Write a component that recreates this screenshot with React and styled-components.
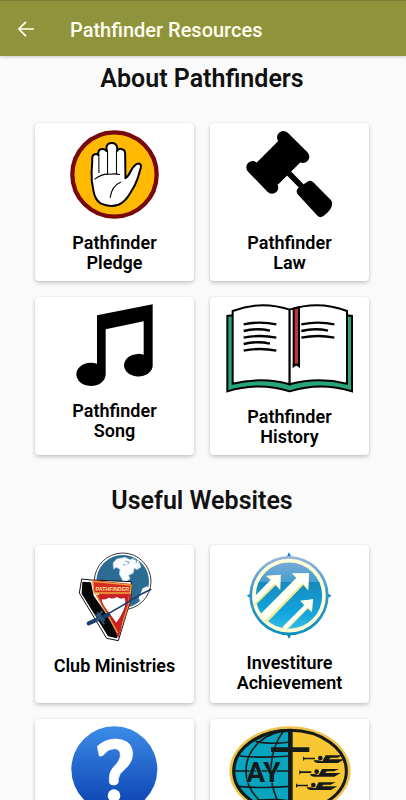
import React from "react";
import styled, { createGlobalStyle } from "styled-components";

const GlobalStyle = createGlobalStyle`
  *, *::before, *::after { box-sizing: border-box; }
  body {
    margin: 0;
    background: #fafafa;
    color: #111;
    font-family: Roboto, "Liberation Sans", sans-serif;
  }
`;

const Screen = styled.div`
  display: flex;
  flex-direction: column;
  height: 100vh;
  overflow: hidden;
`;

const AppBar = styled.header`
  display: flex;
  align-items: center;
  flex: none;
  height: 56px;
  padding: 2px 14px 0;
  gap: 32px;
  background: #8f933b;
  border-top: 1px solid #7c8034;
  box-shadow: 0 1px 3px rgba(0, 0, 0, 0.2);
  color: #fffff0;
  z-index: 1;
`;

const BackButton = styled.button`
  display: flex;
  padding: 0;
  border: 0;
  background: none;
  color: inherit;
  cursor: pointer;
`;

const BarTitle = styled.h1`
  margin: 0;
  font-size: 20px;
  font-weight: 500;
  line-height: 24px;
`;

const Content = styled.main`
  flex: 1;
  min-height: 0;
  overflow-y: auto;
  scrollbar-width: none;
  padding: 8px 37px 16px 35px;
`;

const Section = styled.section`
  margin-bottom: 31px;
`;

const SectionTitle = styled.h2`
  margin: 0 0 29px;
  font-size: 25px;
  font-weight: 600;
  line-height: 30px;
  text-align: center;
`;

const CardGrid = styled.div`
  display: grid;
  grid-template-columns: repeat(2, minmax(0, 1fr));
  gap: 16px;
`;

const Card = styled.a`
  display: flex;
  flex-direction: column;
  align-items: center;
  gap: 14px;
  aspect-ratio: 159 / 158;
  padding: 7px 8px;
  border-radius: 4px;
  background: #fff;
  box-shadow: 0 2px 4px rgba(0, 0, 0, 0.2), 0 0 2px rgba(0, 0, 0, 0.08);
  color: #000;
  text-decoration: none;
`;

const CardLabel = styled.span`
  max-width: ${({ $wide }) => ($wide ? "100%" : "110px")};
  font-size: 18px;
  font-weight: 600;
  line-height: 20px;
  text-align: center;
`;

const Art = styled.svg`
  display: block;
  flex: none;
`;

function BackArrow() {
  return (
    <Art width="24" height="24" viewBox="0 0 24 24" fill="none" stroke="currentColor" strokeWidth="1.7" aria-hidden="true">
      <path d="M20 11H5M12 3.8L4.8 11l7.2 7.2" />
    </Art>
  );
}

function HandArt() {
  return (
    <Art width="89" height="89" viewBox="120 35 268 268" aria-hidden="true">
      <circle cx="254" cy="169" r="127" fill="#ffb900" stroke="#790909" strokeWidth="13" />
      <path
        d="M187 128Q185 110 195 108Q200 106 205 110L205 103Q207 92 217 92Q226 91 230 98L230 86Q232 74 246 74Q260 74 262 88L262 98Q266 90 275 92Q286 94 286 106L287 180Q296 174 304 157Q314 138 326 136Q336 137 333 149L324 180Q316 204 302 224Q286 252 266 260Q240 269 212 256Q194 245 190 214Q184 190 185 162Z"
        fill="#fff" stroke="#000" strokeWidth="6" strokeLinejoin="round"
      />
      <path d="M207 108V163M233 96V165M260 97V167M195 183Q214 167 238 168Q258 166 269 169M272 192Q246 203 241 238" fill="none" stroke="#000" strokeWidth="3.2" strokeLinecap="round" />
    </Art>
  );
}

function GavelArt() {
  return (
    <Art width="87" height="89" viewBox="126 36 261 267" aria-hidden="true">
      <g stroke="#000" strokeLinejoin="round" strokeLinecap="round">
        <path d="M161 136L227 70L286 131L221 195Z" strokeWidth="8" />
        <path d="M238 58L297 116" strokeWidth="38" />
        <path d="M146 148L204 208" strokeWidth="38" />
        <path d="M245 156L300 212" strokeWidth="17" />
        <path d="M292 220L318 203L370 255Q373 266 350 283Z" strokeWidth="28" />
      </g>
    </Art>
  );
}

function NoteArt() {
  return (
    <Art width="77" height="83" viewBox="139 35 231 249" aria-hidden="true">
      <path d="M202 69L369 36V216A43 34 0 1 1 342 187V87L228 111V246A44 35 0 1 1 202 214Z" />
    </Art>
  );
}

function BookArt() {
  return (
    <Art width="127" height="89" viewBox="65 35 381 267" fill="none" stroke="#000" strokeWidth="6" aria-hidden="true">
      <path d="M86 69L69 71V297Q165 268 256 297Q350 268 443 297V71L427 69" fill="#26a67a" />
      <path d="M85 56Q170 23 256 52V276Q174 253 85 274Z" fill="#fff" />
      <path d="M256 52Q342 23 428 56V274Q339 253 256 276Z" fill="#fff" />
      <path d="M268 49L284 45V217H268Z" fill="#bd353d" />
      <path d="M265 214H287V228L276 219L265 228Z" fill="#000" stroke="none" />
      <path
        d="M118 96Q167 86 216 96M118 116Q158 106 197 115M118 136Q167 126 216 136M118 155Q158 145 197 154M118 175Q167 165 216 175M291 96Q341 86 390 96M291 116Q331 106 371 115M291 136Q341 126 390 136"
        strokeWidth="7"
      />
    </Art>
  );
}

function ClubArt() {
  return (
    <Art width="74" height="90" viewBox="53 30 222 270" aria-hidden="true">
      <circle cx="187" cy="118" r="85" fill="#fff" stroke="#111" strokeWidth="2.5" />
      <circle cx="187" cy="118" r="79" fill="#2c6b92" />
      <path
        d="M158 63L169 51L194 46L210 53L219 49L235 58L242 75L230 83L222 79L218 94L205 100L209 111L198 118L209 128L202 130L189 119L177 96L179 82L167 76L160 82Z"
        fill="#f9fbfc" stroke="#b7cedc" strokeWidth="2"
      />
      <path d="M195 57L207 61L201 67M218 51L229 54L227 64M188 67L195 70M216 134L225 136M231 120L230 142" fill="none" stroke="#2c6b92" strokeWidth="2" />
      <path d="M247 139L260 133L265 137Q258 166 240 180L235 168Z" fill="#f9fbfc" />
      <path d="M64 111L92 114L213 119L211 174L174 296L139 289L57 153Z" fill="#fff" stroke="#111" strokeWidth="3" />
      <path d="M66 119L92 121L100 161L177 271L169 289L143 283L64 155Z" fill="#060606" />
      <path d="M97 114L214 126L210 180L174 289Z" fill="#cc2529" />
      <path d="M97 118L212 129L210 153L101 153Z" fill="#d52b21" stroke="#efa940" strokeWidth="4" />
      <text x="156" y="146" textAnchor="middle" fontFamily="Liberation Sans" fontWeight="700" fontSize="16" fill="#ffe29b">PATHFINDER</text>
      <path d="M104 157L171 275L178 267L118 160ZM205 158L207 183L181 267L193 183Z" fill="#e39a35" />
      <path d="M110 158Q156 166 205 157L204 182L175 274Z" fill="#cd2028" />
      <path d="M122 169Q136 173 145 164Q157 172 169 163Q181 172 194 165Q201 183 192 204Q184 224 168 246Q153 224 134 199Q122 185 122 169Z" fill="#fff" stroke="#bd2026" strokeWidth="4" />
      <path d="M84 246Q160 208 210 176Q238 157 273 142" fill="none" stroke="#183d6e" strokeWidth="5" />
      <path d="M85 244L144 218" stroke="#183d6e" strokeWidth="12" strokeLinecap="round" />
      <path d="M111 211L131 247M126 206L107 240M104 218L134 235" stroke="#315777" strokeWidth="6" />
    </Art>
  );
}

function ArrowsArt() {
  return (
    <Art width="87" height="87" viewBox="35 32 261 261" aria-hidden="true">
      <defs>
        <linearGradient id="skyRim" x2="0" y2="1">
          <stop stopColor="#9db7df" /><stop offset=".45" stopColor="#3897cf" /><stop offset="1" stopColor="#078fc1" />
        </linearGradient>
        <linearGradient id="skyFill" x2="0" y2="1">
          <stop stopColor="#7babd8" /><stop offset=".3" stopColor="#459fcf" /><stop offset=".31" stopColor="#168abd" /><stop offset=".75" stopColor="#12a5df" /><stop offset="1" stopColor="#38bee8" />
        </linearGradient>
        <clipPath id="skyClip"><circle cx="164" cy="163" r="110" /></clipPath>
      </defs>
      <path d="M164 33L171 47H157ZM164 293L157 279H171ZM37 163L51 156V171ZM292 163L278 156V171Z" fill="#087fae" />
      <circle cx="164" cy="163" r="119" fill="url(#skyRim)" />
      <circle cx="164" cy="163" r="105" fill="url(#skyFill)" stroke="#fffdd3" strokeWidth="11" />
      <g clipPath="url(#skyClip)">
        <path d="M53 177L111 119L95 105L139 100L138 147L124 132L61 194ZM78 224L188 112L173 97L224 96L222 148L207 131L97 245ZM145 259L211 193L198 179L236 174L233 213L220 202L157 267Z" fill="#ecea94" />
        <path d="M53 173L111 114L96 103L139 100L137 143L122 126L58 189ZM78 219L188 108L173 96L224 96L221 144L205 125L92 239ZM145 256L211 190L198 178L236 174L232 210L220 198L154 265Z" fill="#fffff4" />
      </g>
    </Art>
  );
}

function QuestionArt() {
  return (
    <Art width="87" height="87" viewBox="34 30 261 261" aria-hidden="true">
      <defs>
        <linearGradient id="helpFill" x2="0" y2="1">
          <stop stopColor="#3c8ce8" /><stop offset="1" stopColor="#093fae" />
        </linearGradient>
      </defs>
      <circle cx="164" cy="160" r="129" fill="url(#helpFill)" />
      <path
        d="M113 91Q137 69 168 69Q218 71 219 113Q219 139 195 160Q177 174 176 190V198Q174 207 162 207Q150 207 149 198Q147 170 161 154Q182 133 182 117Q182 99 164 98Q145 98 132 116Q128 121 119 120Z"
        fill="#fff" stroke="#fff" strokeWidth="2" strokeLinejoin="round"
      />
      <circle cx="163" cy="239" r="19" fill="#fff" />
    </Art>
  );
}

function Trumpeter({ x, y }) {
  return (
    <g transform={`translate(${x} ${y})`} fill="#151a1a">
      <path d="M0 -7L4 -3H36V2H5L0 7Z" />
      <circle cx="52" cy="-2" r="7" />
      <path d="M32 5H46L58 8L68 -10H119L104 -3H83L77 2H124L105 13H45Q35 13 32 5Z" />
    </g>
  );
}

function YouthArt() {
  return (
    <Art width="122" height="90" viewBox="54 30 366 270" aria-hidden="true">
      <defs>
        <clipPath id="globeHalf"><path d="M54 30H236V300H54Z" /></clipPath>
      </defs>
      <ellipse cx="237" cy="165" rx="182" ry="134" fill="#edc44c" />
      <ellipse cx="237" cy="165" rx="169" ry="122" fill="#f8c834" stroke="#151a1a" strokeWidth="9" />
      <g clipPath="url(#globeHalf)" fill="none" stroke="#151a1a" strokeWidth="5">
        <ellipse cx="237" cy="165" rx="168" ry="121" fill="#07a5be" strokeWidth="8" />
        <ellipse cx="237" cy="165" rx="132" ry="121" />
        <path d="M218 44Q180 95 180 165Q180 231 218 285M134 77Q181 86 237 78M86 120Q160 127 237 120M70 165H237M82 211Q160 218 237 211M126 255Q181 246 237 255" />
      </g>
      <path d="M231 43H245V288H231ZM180 94H295V108H180Z" fill="#151a1a" />
      <text x="157" y="199" textAnchor="middle" fontFamily="Roboto, Liberation Sans" fontWeight="700" fontSize="84" fill="#151a1a" stroke="#07a5be" strokeWidth="4" paintOrder="stroke">AY</text>
      <Trumpeter x={276} y={128} />
      <Trumpeter x={265} y={169} />
      <Trumpeter x={255} y={209} />
    </Art>
  );
}

const sections = [
  {
    title: "About Pathfinders",
    items: [
      { label: "Pathfinder Pledge", art: HandArt },
      { label: "Pathfinder Law", art: GavelArt },
      { label: "Pathfinder Song", art: NoteArt },
      { label: "Pathfinder History", art: BookArt },
    ],
  },
  {
    title: "Useful Websites",
    items: [
      { label: "Club Ministries", art: ClubArt, wide: true },
      { label: "Investiture Achievement", art: ArrowsArt, wide: true },
      { art: QuestionArt },
      { art: YouthArt },
    ],
  },
];

export default function App() {
  return (
    <Screen>
      <GlobalStyle />
      <AppBar>
        <BackButton type="button" aria-label="Back"><BackArrow /></BackButton>
        <BarTitle>Pathfinder Resources</BarTitle>
      </AppBar>
      <Content>
        {sections.map(({ title, items }) => (
          <Section key={title}>
            <SectionTitle>{title}</SectionTitle>
            <CardGrid>
              {items.map(({ label, art: Picture, wide }, index) => (
                <Card href="#" key={index}>
                  <Picture />
                  {label && <CardLabel $wide={wide}>{label}</CardLabel>}
                </Card>
              ))}
            </CardGrid>
          </Section>
        ))}
      </Content>
    </Screen>
  );
}
